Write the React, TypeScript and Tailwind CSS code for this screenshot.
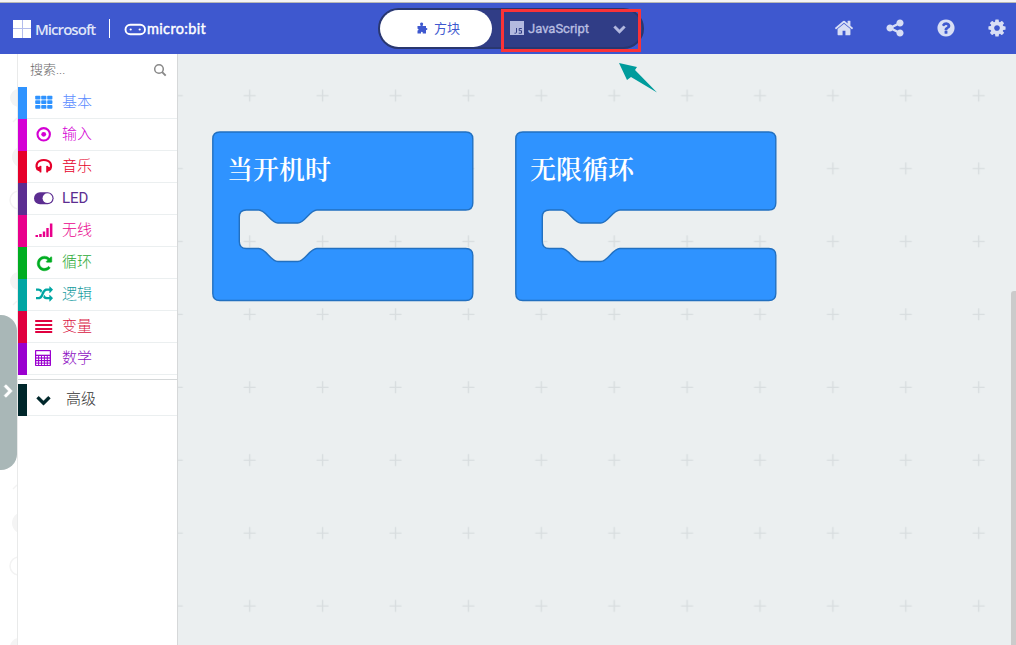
import type { ReactNode } from "react";

const HOME =
  "M1472 992v480q0 26-19 45t-45 19h-384v-384h-256v384h-384q-26 0-45-19t-19-45v-480q0-1 .5-3t.5-3l575-474 575 474q1 2 1 6zm223-69l-62 74q-8 9-21 11h-3q-13 0-21-7l-692-577-692 577q-12 8-24 7-13-2-21-11l-62-74q-8-10-7-23.5t11-21.5l719-599q32-26 76-26t76 26l244 204v-195q0-14 9-23t23-9h192q14 0 23 9t9 23v408l219 182q10 8 11 21.5t-7 23.5z";
const SHARE =
  "M1344 1024q133 0 226.5 93.5t93.5 226.5-93.5 226.5-226.5 93.5-226.5-93.5-93.5-226.5q0-12 2-34l-360-180q-92 86-218 86-133 0-226.5-93.5t-93.5-226.5 93.5-226.5 226.5-93.5q126 0 218 86l360-180q-2-22-2-34 0-133 93.5-226.5t226.5-93.5 226.5 93.5 93.5 226.5-93.5 226.5-226.5 93.5q-126 0-218-86l-360 180q2 22 2 34t-2 34l360 180q92-86 218-86z";
const HELP =
  "M1024 1376v-192q0-14-9-23t-23-9h-192q-14 0-23 9t-9 23v192q0 14 9 23t23 9h192q14 0 23-9t9-23zm256-672q0-88-55.5-163t-138.5-116-170-41q-243 0-371 213-15 24 8 42l132 100q7 6 19 6 16 0 25-12 53-68 86-92 34-24 86-24 48 0 85.5 26t37.5 59q0 38-20 61t-68 45q-63 28-115.5 86.5t-52.5 125.5v36q0 14 9 23t23 9h192q14 0 23-9t9-23q0-19 21.5-49.5t54.5-49.5q32-18 49-28.5t46-35 44.5-48 28-60.5 12.5-81zm384 192q0 209-103 385.5t-279.5 279.5-385.5 103-385.5-103-279.5-279.5-103-385.5 103-385.5 279.5-279.5 385.5-103 385.5 103 279.5 279.5 103 385.5z";
const COG =
  "M1152 896q0-106-75-181t-181-75-181 75-75 181 75 181 181 75 181-75 75-181zm512-109v222q0 12-8 23t-20 13l-185 28q-19 54-39 91 35 50 107 138 10 12 10 25t-9 23q-27 37-99 108t-94 71q-12 0-26-9l-138-108q-44 23-91 38-16 136-29 186-7 28-36 28h-222q-14 0-24.5-8.5t-11.5-21.5l-28-184q-49-16-90-37l-141 107q-10 9-25 9-14 0-25-11-126-114-165-168-7-10-7-23 0-12 8-23 15-21 51-66.5t54-70.5q-27-50-41-99l-183-27q-13-2-21-12.5t-8-23.5v-222q0-12 8-23t19-13l186-28q14-46 39-92-40-57-107-138-10-12-10-24 0-10 9-23 26-36 98.5-107.5t94.5-71.5q13 0 26 10l138 107q44-23 91-38 16-136 29-186 7-28 36-28h222q14 0 24.5 8.500t11.500 21.500l28 184q49 16 90 37l142-107q9-9 24-9 13 0 25 10 129 119 165 170 7 8 7 22 0 12-8 23-15 21-51 66.500t-54 70.500q26 50 41 98l183 28q13 2 21 12.500t8 23.500z";
const REPEAT =
  "M1664 256v448q0 26-19 45t-45 19h-448q-42 0-59-40-17-39 14-69l138-138q-148-137-349-137-104 0-198.5 40.5t-163.5 109.5-109.5 163.5-40.5 198.5 40.5 198.5 109.5 163.5 163.5 109.5 198.5 40.5q119 0 225-52t179-147q7-10 23-12 15 0 25 9l137 138q9 8 9.5 20.5t-7.5 22.5q-109 132-264 204.5t-327 72.5q-156 0-298-61t-245-164-164-245-61-298 61-298 164-245 245-164 298-61q147 0 284.5 55.5t244.5 156.5l130-129q29-31 70-14 39 17 39 59z";
const RANDOM =
  "M666 481q-60 92-137 273-22-45-37-72.5t-40.5-63.5-51-56.5-63-35-81.5-14.5h-224q-14 0-23-9t-9-23v-192q0-14 9-23t23-9h224q250 0 410 225zm1126 799q0 14-9 23l-320 320q-9 9-23 9-13 0-22.5-9.5t-9.5-22.5v-192q-32 0-85 .5t-81 1-73-1-71-5-64-10.5-63-18.5-58-28.5-59-40-55-53.5-56-69.5q59-93 136-273 22 45 37 72.5t40.5 63.5 51 56.5 63 35 81.5 14.5h256v-192q0-14 9-23t23-9q12 0 24 10l319 319q9 9 9 23zm0-896q0 14-9 23l-320 320q-9 9-23 9-13 0-22.5-9.5t-9.5-22.5v-192h-256q-48 0-87 15t-69 45-51 61.5-45 77.5q-32 62-78 171-29 66-49.5 111t-54 105-64 100-74 83-90 68.5-106.5 42-128 16.5h-224q-14 0-23-9t-9-23v-192q0-14 9-23t23-9h224q48 0 87-15t69-45 51-61.5 45-77.5q32-62 78-171 29-66 49.5-111t54-105 64-100 74-83 90-68.5 106.5-42 128-16.5h256v-192q0-14 9-23t23-9q12 0 24 10l319 319q9 9 9 23z";
const CHEVRON =
  "M1683 808l-742 741q-19 19-45 19t-45-19l-742-741q-19-19-19-45.5t19-45.5l166-165q19-19 45-19t45 19l531 531 531-531q19-19 45-19t45 19l166 165q19 19 19 45.5t-19 45.5z";

function Glyph({ d, className, bold = false }: { d: string; className: string; bold?: boolean }) {
  return (
    <svg viewBox="0 0 1792 1792" fill="currentColor" stroke="currentColor" strokeWidth={bold ? 50 : 0} className={className}>
      <path d={d} />
    </svg>
  );
}

function Small({ children }: { children: ReactNode }) {
  return (
    <svg viewBox="0 0 20 18" className="h-[18px] w-5" fill="currentColor">
      {children}
    </svg>
  );
}

const categories: { label: string; bar: string; text: string; icon: ReactNode }[] = [
  {
    label: "基本", bar: "bg-[#2f93ff]", text: "text-[#5b8cff]",
    icon: (
      <Small>
        {[2.7, 7.3, 11.9].map((y, r) =>
          [1.2, 7.2, 13.2].map((x, c) => (
            <rect key={`${r}${c}`} x={x} y={y} width="5.2" height="3.8" rx="0.8" fill="#2f93ff" />
          )),
        )}
      </Small>
    ),
  },
  {
    label: "输入", bar: "bg-[#d400d4]", text: "text-[#d400d4]",
    icon: (
      <Small>
        <circle cx="9.700" cy="9.300" r="6.200" fill="none" stroke="currentColor" strokeWidth="2.100" />
        <circle cx="9.700" cy="9.300" r="2.400" />
      </Small>
    ),
  },
  {
    label: "音乐", bar: "bg-[#e6002a]", text: "text-[#e6002a]",
    icon: (
      <Small>
        <path d="M3.600 12.800C1 7.800 3.200 3 9.800 3S18.600 7.800 16 12.800" fill="none" stroke="currentColor" strokeWidth="2.100" />
        <path d="M2.500 10.800L5.600 9.600V9Q6.500 8.500 7.400 9V15.200Q6.500 15.800 5.600 15.300V14.500L3.300 13.600ZM17.100 10.800L14 9.600V9Q13.100 8.500 12.200 9V15.200Q13.100 15.800 14 15.300V14.500L16.300 13.600Z" />
      </Small>
    ),
  },
  {
    label: "LED", bar: "bg-[#5c2d91]", text: "text-[#5c2d91]",
    icon: (
      <Small>
        <rect x="0" y="3.200" width="19.600" height="12" rx="6" />
        <circle cx="13.500" cy="9.200" r="4.900" fill="white" />
      </Small>
    ),
  },
  {
    label: "无线", bar: "bg-[#e9008c]", text: "text-[#e9008c]",
    icon: (
      <Small>
        <path d="M1.500 14h2.500v2h-2.500zM5.200 13h2.500v3h-2.500zM8.800 10.500h2.400v5.500h-2.400zM12.300 7h2.400v9h-2.400zM15.900 2.500h2.500v13.500h-2.500z" />
      </Small>
    ),
  },
  {
    label: "循环", bar: "bg-[#00ad21]", text: "text-[#2caa35]",
    icon: <Glyph bold d={REPEAT} className="size-[17px] translate-y-px text-[#00ad21]" />,
  },
  {
    label: "逻辑", bar: "bg-[#00a6a3]", text: "text-[#189c9f]",
    icon: <Glyph d={RANDOM} className="size-[17px] overflow-visible text-[#00a6a3]" />,
  },
  {
    label: "变量", bar: "bg-[#e0003f]", text: "text-[#d9143f]",
    icon: (
      <Small>
        <path d="M1.200 3h17v2h-17zM1.200 7h17v2h-17zM1.200 11h17v2h-17zM1.200 14h17v2h-17z" fill="#e0003f" />
      </Small>
    ),
  },
  {
    label: "数学", bar: "bg-[#9a00cf]", text: "text-[#8d10c2]",
    icon: (
      <Small>
        <rect x="1" y="1" width="16" height="16" rx="0.800" fill="#9a00cf" />
        <path d="M2.200 2.200h13.600v3.500h-13.600z" fill="white" />
        {[7, 9.600, 12.200, 14.600].map((y) =>
          [2.200, 5.100, 8, 10.900, 13.800].map((x) => (
            <rect key={`${x}-${y}`} x={x} y={y} width="1.900" height="1.400" fill="white" />
          )),
        )}
      </Small>
    ),
  },
];

const BLOCK =
  "M7 0H253Q260 0 260 7V71Q260 78 253 78H104C97 78 92 91 85 91H65C58 91 53 78 46 78H33.500Q26.500 78 26.500 85V109.500Q26.500 116.500 33.500 116.500H46C53 116.500 58 129.500 65 129.500H85C92 129.500 97 116.500 104 116.500H253Q260 116.500 260 123.500V161.500Q260 168.500 253 168.500H7Q0 168.500 0 161.500V7Q0 0 7 0Z";

function Workspace() {
  return (
    <svg width="838" height="591" viewBox="178 54 838 591" className="block">
      <defs>
        <pattern id="grid" x="213.200" y="59.400" width="72.900" height="72.900" patternUnits="userSpaceOnUse">
          <path d="M30.500 36.300h12M36.500 30.300v12" stroke="#d8dddf" strokeWidth="1.400" />
        </pattern>
      </defs>
      <rect x="178" y="54" width="838" height="591" fill="#ebeff0" />
      <rect x="178" y="54" width="838" height="591" fill="url(#grid)" />
      {[
        { x: 212.800, tx: 227, label: "当开机时" },
        { x: 515.800, tx: 530, label: "无限循环" },
      ].map((b) => (
        <g key={b.label}>
          <path d={BLOCK} transform={`translate(${b.x} 132)`} fill="#2f93ff" stroke="#2270c0" strokeWidth="1.400" />
          <text x={b.tx} y="179" fill="white" className="font-['Noto_Serif_CJK_SC','Noto_Sans_CJK_SC',serif] text-[26px] font-semibold">
            {b.label}
          </text>
        </g>
      ))}
      <path d="M619 63L637 67L635 70L657 92.500L631 77L627 80Z" fill="#009c9c" />
      <path d="M1011 645V294Q1011 291 1014 291H1016V645Z" fill="#cbcbcb" />
    </svg>
  );
}

function Header() {
  return (
    <header className="flex h-[51px] w-full shrink-0 items-center bg-[#3e58cf] text-white">
      <div className="flex w-[378px] items-center pl-[13px]">
        <div className="grid size-[18px] grid-cols-2 gap-px bg-[#b3bdec]">
          <i className="bg-white" /><i className="bg-white" /><i className="bg-white" /><i className="bg-white" />
        </div>
        <div className="w-[74px] pl-[4px] font-['Open_Sans',sans-serif] text-[15px] leading-[24px] font-semibold tracking-[-0.95px] text-[#dfe4f8]">Microsoft</div>
        <div className="ml-[4px] h-[19px] w-px bg-white" />
        <svg width="23" height="24" className="ml-[14px]">
          <rect x="1.500" y="7.700" width="19.500" height="9.600" rx="4.800" fill="none" stroke="white" strokeWidth="1.900" />
          <circle cx="6.700" cy="12.500" r="1.100" fill="white" />
          <circle cx="15.700" cy="12.500" r="1.100" fill="white" />
        </svg>
        <div className="font-['Lato','Open_Sans',sans-serif] text-[14.500px] leading-[22px] font-normal tracking-[0.35px] [-webkit-text-stroke:0.4px_white]">micro:bit</div>
      </div>
      <div className="flex h-[41px] w-[266px] items-center rounded-full border-2 border-[#29376f] bg-[#303d86]">
        <div className="flex h-[37px] w-[112px] items-center rounded-full bg-white pl-[37px] text-[#3e58cf]">
          <svg width="11" height="12" viewBox="0 0 11 12" fill="currentColor" className="-translate-y-px">
            <path d="M0.500 4H3.500V3Q2.900 2.500 3.100 1.500Q3.500 0.500 4.600 0.500Q5.800 0.500 6.100 1.500Q6.300 2.500 5.700 3V4H9V6.200Q10.300 5.800 10.400 7Q10.300 8.200 9 7.900V11.500H5.700V10.300Q5.300 9.700 4.800 9.700Q4.300 9.700 4 10.300V11.500H0.500V8.500Q1.500 8.500 1.500 7.600Q1.500 6.700 0.500 6.800Z" />
          </svg>
          <span className="ml-[6px] text-[13px]">方块</span>
        </div>
        <div className="ml-[9px] flex h-[43px] w-[140px] shrink-0 translate-y-[2px] items-center border-[3px] border-[#fb3337] pb-[5px] pl-[6px] text-[#b3b9df]">
          <svg width="14" height="14" viewBox="0 0 14 14">
            <rect width="14" height="14" fill="#b3b9df" />
            <path d="M6.500 7v4.200q0 1-1 1H4.500M11.800 7.500H9.200v2.200h2.300v2.500H8.700" fill="none" stroke="#303d86" strokeWidth="1" />
          </svg>
          <svg width="64" height="20" className="ml-[4px]" fill="#b9bee1">
            <text x="0" y="15" textLength="61" lengthAdjust="spacingAndGlyphs" stroke="#b9bee1" strokeWidth="0.350" className="font-['Roboto',sans-serif] text-[13.500px] font-normal">JavaScript</text>
          </svg>
          <Glyph bold d={CHEVRON} className="ml-[21px] size-[13px] overflow-visible" />
        </div>
      </div>
      <div className="ml-auto flex -translate-y-px items-center gap-[31px] pr-[10px] text-[#d8def5]">
        <Glyph d={HOME} className="size-5" />
        <Glyph d={SHARE} className="size-5" />
        <Glyph d={HELP} className="size-5" />
        <Glyph d={COG} className="-mr-[1px] size-5" />
      </div>
    </header>
  );
}

function Rail() {
  return (
    <div className="flex h-full w-[18px] shrink-0 flex-col border-r border-[#e9eaea] bg-white">
      <svg width="17" height="261" viewBox="0 54 17 261">
        <g fill="#f4f4f4">
          <circle cx="19" cy="98" r="9" />
          <circle cx="23" cy="157" r="11" />
          <circle cx="19" cy="281" r="9" />
        </g>
        <path d="M13 122l4-4M13 305l4-4" stroke="#f3f3f3" strokeWidth="1.500" />
        <circle cx="19" cy="200" r="9" fill="none" stroke="#f3f3f3" strokeWidth="1.500" />
      </svg>
      <div className="flex h-[155px] w-[17px] items-center rounded-r-[16px] bg-[#a9b7b7] pb-[3px] text-white">
        <Glyph bold d={CHEVRON} className="size-[14px] -rotate-90 overflow-visible" />
      </div>
      <svg width="17" height="175" viewBox="0 470 17 175">
        <circle cx="23" cy="523" r="11" fill="#f4f4f4" />
        <circle cx="19" cy="647" r="9" fill="#f4f4f4" />
        <path d="M13 489l4-4" stroke="#f3f3f3" strokeWidth="1.500" />
        <circle cx="19" cy="566" r="9" fill="none" stroke="#f3f3f3" strokeWidth="1.500" />
      </svg>
    </div>
  );
}

function Sidebar() {
  return (
    <aside className="flex h-full w-[160px] shrink-0 flex-col border-r border-[#d6d8d9] bg-white">
      <div className="flex h-[33px] items-center justify-between pr-[10px] pb-[2px] pl-3 text-[13px] text-[#666666]">
        <span className="font-light">搜索...</span>
        <svg width="14" height="14" fill="none" stroke="#888888" strokeWidth="1.500">
          <circle cx="6" cy="6" r="4.300" />
          <path d="M9.200 9.200l3.500 3.500" strokeWidth="1.900" />
        </svg>
      </div>
      {categories.map((c) => (
        <div key={c.label} className={`flex h-8 shrink-0 items-stretch ${c.text}`}>
          <div className={`w-[9px] ${c.bar}`} />
          <div className="flex flex-1 items-center border-b border-[#ebeff0]">
            <div className="flex w-[35px] items-center justify-center pr-px pb-px">{c.icon}</div>
            <span className={`pb-px text-[15px] leading-[29px] ${c.label === "LED" ? "font-normal" : "font-light"}`}>{c.label}</span>
          </div>
        </div>
      ))}
      <div className="h-[9px] shrink-0">
        <div className="h-[5px] border-b border-[#d5d8d9]" />
      </div>
      <div className="flex h-8 shrink-0 text-[#333333]">
        <div className="w-[9px] bg-[#00272b]" />
        <div className="flex flex-1 items-center border-b border-[#ebeff0] pl-[9px]">
          <Glyph bold d={CHEVRON} className="size-[15px] overflow-visible text-[#00272b]" />
          <span className="ml-[15px] pb-px text-[15px] leading-[29px] font-light">高级</span>
        </div>
      </div>
    </aside>
  );
}

export default function App() {
  return (
    <div className="flex h-[645px] w-[1016px] flex-col overflow-hidden bg-white font-['Roboto','Noto_Sans_CJK_SC',sans-serif]">
      <div className="h-[3px] shrink-0 border-b border-[#b9b9b4] bg-[#f4f4f4]" />
      <Header />
      <main className="flex h-[591px] shrink-0">
        <Rail />
        <Sidebar />
        <Workspace />
      </main>
    </div>
  );
}
